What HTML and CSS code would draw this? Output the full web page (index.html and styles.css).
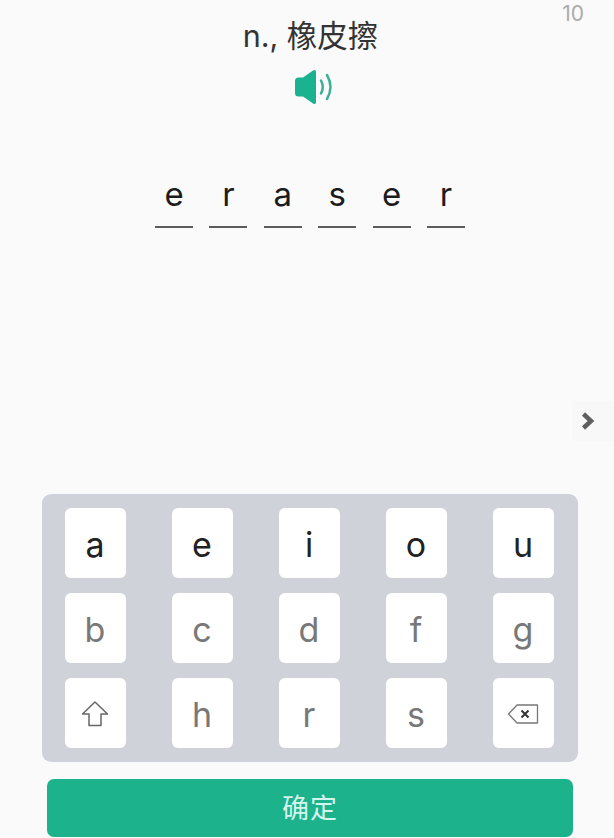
FILE: index.html
```html
<!DOCTYPE html>
<html lang="zh">
<head>
<meta charset="utf-8">
<title>eraser</title>
<link rel="stylesheet" href="styles.css">
</head>
<body>
<div class="page">
  <span class="counter">10</span>
  <h1 class="meaning">n., 橡皮擦</h1>
  <div class="sound">
    <svg width="42" height="38" viewBox="0 0 42 38">
      <path class="sound-body" d="M2 13Q2 9.500 5.500 9.500H10L20 2.500Q23 1 23 4V34Q23 37 20 35.500L10 28.500H5.500Q2 28.500 2 25Z"/>
      <path class="sound-wave" d="M28 12.500Q31.500 19 28 25.500"/>
      <path class="sound-wave" d="M34 7Q41 19 34 31"/>
    </svg>
  </div>
  <div class="word">
    <span class="slot">e</span><span class="slot">r</span><span class="slot">a</span><span class="slot">s</span><span class="slot">e</span><span class="slot">r</span>
  </div>
  <div class="next">
    <svg width="16" height="20" viewBox="0 0 16 20"><path d="M3.500 3L11 10L3.500 17" fill="none" stroke="#5f5f5f" stroke-width="4.500"/></svg>
  </div>
  <div class="keyboard">
    <button class="key key-on">a</button>
    <button class="key key-on">e</button>
    <button class="key key-on">i</button>
    <button class="key key-on">o</button>
    <button class="key key-on">u</button>
    <button class="key">b</button>
    <button class="key">c</button>
    <button class="key">d</button>
    <button class="key">f</button>
    <button class="key">g</button>
    <button class="key">
      <svg width="30" height="28" viewBox="0 0 30 28"><path d="M15 2L27.500 14H21V25.500H9V14H2.500Z" fill="none" stroke="#666" stroke-width="1.500" stroke-linejoin="round"/></svg>
    </button>
    <button class="key">h</button>
    <button class="key">r</button>
    <button class="key">s</button>
    <button class="key">
      <svg width="32" height="22" viewBox="0 0 32 22"><path d="M10 2H30.500V20H10L1.500 11Z" fill="none" stroke="#777" stroke-width="1.300" stroke-linejoin="round"/><path d="M14.500 7.500L21.500 14.500M21.500 7.500L14.500 14.500" fill="none" stroke="#333" stroke-width="2"/></svg>
    </button>
  </div>
  <button class="confirm">确定</button>
</div>
</body>
</html>
```
FILE: styles.css
```css
* { box-sizing: border-box; }
html, body { margin: 0; padding: 0; }
body {
  width: 614px;
  height: 838px;
  overflow: hidden;
  background: #fafafa;
  font-family: Inter, "Liberation Sans", "Noto Sans CJK SC", sans-serif;
}
.page {
  position: relative;
  height: 838px;
  display: flex;
  flex-direction: column;
  align-items: center;
  padding-top: 16px;
}
.counter {
  position: absolute;
  top: 2px;
  right: 30px;
  font-size: 21px;
  line-height: 24px;
  color: #ababab;
}
.meaning {
  margin: 0 0 0 7px;
  font-size: 30.500px;
  line-height: 40px;
  font-weight: 400;
  color: #333;
}
.sound {
  height: 38px;
  margin-top: 12px;
  margin-left: 14px;
}
.sound-body { fill: #1bb28f; }
.sound-wave { fill: none; stroke: #3fae96; stroke-width: 2.500; stroke-linecap: round; }
.word {
  display: flex;
  gap: 16.400px;
  margin-top: 60px;
  height: 62px;
  margin-left: 6px;
}
.slot {
  width: 38px;
  height: 62px;
  border-bottom: 2px solid #5c5c5c;
  text-align: center;
  font-size: 33px;
  line-height: 56px;
  color: #1c1c1c;
}
.next {
  position: absolute;
  top: 401px;
  right: 0;
  width: 42px;
  height: 40px;
  background: #f8f8f8;
  padding-right: 10px;
  display: flex;
  align-items: center;
  justify-content: center;
}
.keyboard {
  width: 536px;
  height: 268px;
  margin-top: auto;
  margin-left: 5px;
  padding: 14px 24px 14px 23px;
  background: #cfd2d8;
  border-radius: 9px;
  display: grid;
  grid-template-columns: repeat(5, 61px);
  grid-template-rows: repeat(3, 70px);
  justify-content: space-between;
  align-content: space-between;
}
.key {
  border: 0;
  padding: 2px 0 0;
  background: #fff;
  border-radius: 6px;
  font: inherit;
  font-size: 34px;
  color: #787878;
  display: flex;
  align-items: center;
  justify-content: center;
}
.key-on { color: #222; }
.confirm {
  width: 526px;
  height: 58px;
  margin: 17px 0 1px 6px;
  padding: 0 0 4px;
  border: 0;
  border-radius: 7px;
  background: #1bb28c;
  color: #d4f5ec;
  font: inherit;
  font-size: 27px;
  letter-spacing: 1px;
}
```
